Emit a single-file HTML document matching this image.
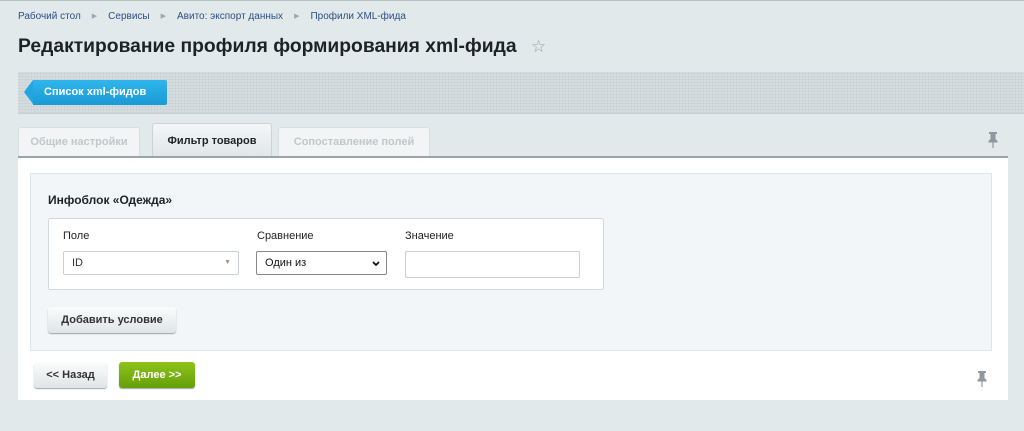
<!DOCTYPE html>
<html><head><meta charset="utf-8"><style>
*{box-sizing:border-box;margin:0;padding:0}
body{width:1024px;height:431px;background:#e2e9eb;font-family:"Liberation Sans",Arial,sans-serif;position:relative;overflow:hidden;border-top:1px solid #b8c0c3}
.abs{position:absolute}
.bc{top:10px;left:18px;font-size:10px;color:#2c4f80;white-space:nowrap}
.bc span.s{color:#a0a8ab;font-size:7px;margin:0 11px;position:relative;top:-1px}
h1{position:absolute;top:35px;left:18px;font-size:19.3px;font-weight:bold;color:#1c2326;white-space:nowrap}
.star{top:36px;left:531px;font-size:17px;color:#9aa3a7}
.bar{top:71px;left:18px;width:1006px;height:42px;background:#d5dde0;border-bottom:1px solid #c5ced1;background-image:radial-gradient(#c7d0d3 0.8px,transparent 1px);background-size:3px 3px}
.btnb{top:79px;left:33px;width:134px;height:25px;background:linear-gradient(#2fb5ec,#1a9ad6);color:#fff;font-weight:bold;font-size:11px;line-height:25px;padding-left:11px;border-radius:0 2px 2px 0}
.btnb:before{content:"";position:absolute;left:-9px;top:0;border-right:9px solid #22a6e0;border-top:12.5px solid transparent;border-bottom:12.5px solid transparent}
.tab{top:126px;height:30px;background:#f2f4f5;border:1px solid #d8dfe1;border-bottom:none;border-radius:3px 3px 0 0;font-size:11px;font-weight:bold;color:#c2c7c9;line-height:28px;text-align:center}
.tab.a{top:122px;height:34px;background:linear-gradient(#f4f6f7,#e1e6e8);color:#1d2326;line-height:34px;border-color:#ccd3d6}
.panel{top:155px;left:18px;width:990px;height:244px;background:#fff;border-top:2px solid #9ba5a8}
.inner{top:172px;left:30px;width:962px;height:178px;background:#f2f6f8;border:1px solid #dfe6e9}
.h2{top:192px;left:48px;font-size:12px;font-weight:bold;color:#1d2326}
.box{top:217px;left:48px;width:556px;height:72px;background:#fff;border:1px solid #d3dadd;border-radius:2px}
.lbl{font-size:11px;color:#222;top:229px}
.sel{top:250px;height:24px;border:1px solid #c9cfd2;border-radius:2px;background:#fff;font-size:11px;color:#333;line-height:22px;padding-left:8px}
.btn{height:26px;border-radius:3px;font-size:11px;font-weight:bold;text-align:center;line-height:26px;background:linear-gradient(#fbfcfc,#dfe5e7);color:#333;box-shadow:0 1px 1px #9aa5a9}
</style></head><body>
<div class="abs bc">Рабочий стол<span class="s">▶</span>Сервисы<span class="s">▶</span>Авито: экспорт данных<span class="s">▶</span>Профили XML-фида</div>
<h1>Редактирование профиля формирования xml-фида</h1>
<div class="abs star">☆</div>
<div class="abs bar"></div>
<div class="abs btnb">Список xml-фидов</div>
<div class="abs tab" style="left:18px;width:122px">Общие настройки</div>
<div class="abs tab a" style="left:152px;width:120px">Фильтр товаров</div>
<div class="abs tab" style="left:278px;width:152px">Сопоставление полей</div>
<svg class="abs" style="top:130px;left:987px" width="12" height="18" viewBox="0 0 12 18"><path d="M2 1h8v2H8.5v5l2 2v1.5h-9V10l2-2V3H2z" fill="#8f989c"/><path d="M6 11.5V17" stroke="#8f989c" stroke-width="1.2"/></svg>
<div class="abs panel"></div>
<div class="abs inner"></div>
<div class="abs h2">Инфоблок «Одежда»</div>
<div class="abs box"></div>
<div class="abs lbl" style="left:63px">Поле</div>
<div class="abs lbl" style="left:257px">Сравнение</div>
<div class="abs lbl" style="left:405px">Значение</div>
<div class="abs sel" style="left:63px;width:176px">ID<span style="position:absolute;right:7px;top:0;font-size:7px;color:#999">▼</span></div>
<div class="abs sel" style="left:256px;width:131px;border-color:#888;color:#111">Один из<svg style="position:absolute;right:6px;top:9px" width="8" height="6" viewBox="0 0 8 6"><path d="M1 1l3 3 3-3" stroke="#111" stroke-width="1.8" fill="none"/></svg></div>
<div class="abs sel" style="left:405px;width:175px;height:27px"></div>
<div class="abs btn" style="top:306px;left:48px;width:128px">Добавить условие</div>
<div class="abs btn" style="top:361px;left:34px;width:73px">&lt;&lt; Назад</div>
<div class="abs btn" style="top:361px;left:119px;width:76px;background:linear-gradient(#8fc21a,#64a00a);color:#fff">Далее &gt;&gt;</div>
<svg class="abs" style="top:369px;left:976px" width="12" height="18" viewBox="0 0 12 18"><path d="M2 1h8v2H8.5v5l2 2v1.5h-9V10l2-2V3H2z" fill="#8f989c"/><path d="M6 11.5V17" stroke="#8f989c" stroke-width="1.2"/></svg>
</body></html>
